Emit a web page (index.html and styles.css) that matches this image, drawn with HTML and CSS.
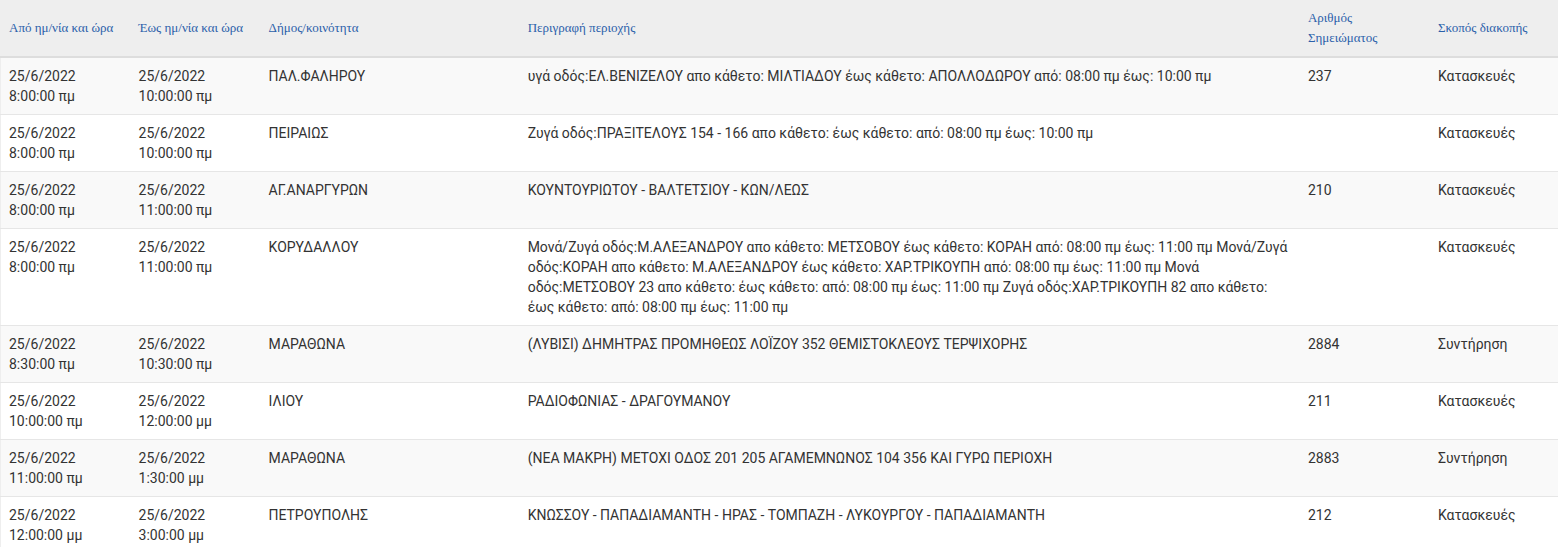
FILE: index.html
```html
<!DOCTYPE html>
<html lang="el">
<head>
<meta charset="utf-8">
<title>Διακοπές</title>
<link rel="stylesheet" href="styles.css">
</head>
<body>
<table class="grid">
  <colgroup>
    <col class="c-from"><col class="c-to"><col class="c-muni"><col class="c-desc"><col class="c-num"><col class="c-purpose">
  </colgroup>
  <thead>
    <tr>
      <th>Από ημ/νία και ώρα</th>
      <th>Έως ημ/νία και ώρα</th>
      <th>Δήμος/κοινότητα</th>
      <th>Περιγραφή περιοχής</th>
      <th>Αριθμός Σημειώματος</th>
      <th>Σκοπός διακοπής</th>
    </tr>
  </thead>
  <tbody>
    <tr>
      <td>25/6/2022<br>8:00:00 πμ</td>
      <td>25/6/2022<br>10:00:00 πμ</td>
      <td>ΠΑΛ.ΦΑΛΗΡΟΥ</td>
      <td>υγά οδός:ΕΛ.ΒΕΝΙΖΕΛΟΥ απο κάθετο: ΜΙΛΤΙΑΔΟΥ έως κάθετο: ΑΠΟΛΛΟΔΩΡΟΥ από: 08:00 πμ έως: 10:00 πμ</td>
      <td>237</td>
      <td>Κατασκευές</td>
    </tr>
    <tr>
      <td>25/6/2022<br>8:00:00 πμ</td>
      <td>25/6/2022<br>10:00:00 πμ</td>
      <td>ΠΕΙΡΑΙΩΣ</td>
      <td>Ζυγά οδός:ΠΡΑΞΙΤΕΛΟΥΣ 154 - 166 απο κάθετο: έως κάθετο: από: 08:00 πμ έως: 10:00 πμ</td>
      <td></td>
      <td>Κατασκευές</td>
    </tr>
    <tr>
      <td>25/6/2022<br>8:00:00 πμ</td>
      <td>25/6/2022<br>11:00:00 πμ</td>
      <td>ΑΓ.ΑΝΑΡΓΥΡΩΝ</td>
      <td>ΚΟΥΝΤΟΥΡΙΩΤΟΥ - ΒΑΛΤΕΤΣΙΟΥ - ΚΩΝ/ΛΕΩΣ</td>
      <td>210</td>
      <td>Κατασκευές</td>
    </tr>
    <tr>
      <td>25/6/2022<br>8:00:00 πμ</td>
      <td>25/6/2022<br>11:00:00 πμ</td>
      <td>ΚΟΡΥΔΑΛΛΟΥ</td>
      <td>Μονά/Ζυγά οδός:Μ.ΑΛΕΞΑΝΔΡΟΥ απο κάθετο: ΜΕΤΣΟΒΟΥ έως κάθετο: ΚΟΡΑΗ από: 08:00 πμ έως: 11:00 πμ Μονά/Ζυγά οδός:ΚΟΡΑΗ απο κάθετο: Μ.ΑΛΕΞΑΝΔΡΟΥ έως κάθετο: ΧΑΡ.ΤΡΙΚΟΥΠΗ από: 08:00 πμ έως: 11:00 πμ Μονά οδός:ΜΕΤΣΟΒΟΥ 23 απο κάθετο: έως κάθετο: από: 08:00 πμ έως: 11:00 πμ Ζυγά οδός:ΧΑΡ.ΤΡΙΚΟΥΠΗ 82 απο κάθετο: έως κάθετο: από: 08:00 πμ έως: 11:00 πμ</td>
      <td></td>
      <td>Κατασκευές</td>
    </tr>
    <tr>
      <td>25/6/2022<br>8:30:00 πμ</td>
      <td>25/6/2022<br>10:30:00 πμ</td>
      <td>ΜΑΡΑΘΩΝΑ</td>
      <td>(ΛΥΒΙΣΙ) ΔΗΜΗΤΡΑΣ ΠΡΟΜΗΘΕΩΣ ΛΟΪΖΟΥ 352 ΘΕΜΙΣΤΟΚΛΕΟΥΣ ΤΕΡΨΙΧΟΡΗΣ</td>
      <td>2884</td>
      <td>Συντήρηση</td>
    </tr>
    <tr>
      <td>25/6/2022<br>10:00:00 πμ</td>
      <td>25/6/2022<br>12:00:00 μμ</td>
      <td>ΙΛΙΟΥ</td>
      <td>ΡΑΔΙΟΦΩΝΙΑΣ - ΔΡΑΓΟΥΜΑΝΟΥ</td>
      <td>211</td>
      <td>Κατασκευές</td>
    </tr>
    <tr>
      <td>25/6/2022<br>11:00:00 πμ</td>
      <td>25/6/2022<br>1:30:00 μμ</td>
      <td>ΜΑΡΑΘΩΝΑ</td>
      <td>(ΝΕΑ ΜΑΚΡΗ) ΜΕΤΟΧΙ ΟΔΟΣ 201 205 ΑΓΑΜΕΜΝΩΝΟΣ 104 356 ΚΑΙ ΓΥΡΩ ΠΕΡΙΟΧΗ</td>
      <td>2883</td>
      <td>Συντήρηση</td>
    </tr>
    <tr>
      <td>25/6/2022<br>12:00:00 μμ</td>
      <td>25/6/2022<br>3:00:00 μμ</td>
      <td>ΠΕΤΡΟΥΠΟΛΗΣ</td>
      <td>ΚΝΩΣΣΟΥ - ΠΑΠΑΔΙΑΜΑΝΤΗ - ΗΡΑΣ - ΤΟΜΠΑΖΗ - ΛΥΚΟΥΡΓΟΥ - ΠΑΠΑΔΙΑΜΑΝΤΗ</td>
      <td>212</td>
      <td>Κατασκευές</td>
    </tr>
  </tbody>
</table>
</body>
</html>
```
FILE: styles.css
```css
html, body {
  margin: 0;
  padding: 0;
  background: #fff;
}
body {
  font-family: Roboto, "Liberation Sans", sans-serif;
  font-size: 14px;
  line-height: 20px;
  color: #333;
}
.grid {
  width: 1558px;
  border-collapse: collapse;
  border-spacing: 0;
  table-layout: fixed;
  border-left: 1px solid #eee;
}
.c-from { width: 130px; }
.c-to { width: 130px; }
.c-muni { width: 259px; }
.c-desc { width: 780px; }
.c-num { width: 130px; }
.c-purpose { width: 128px; }
.grid th {
  background: #eee;
  font-family: "Liberation Serif", serif;
  font-weight: normal;
  font-size: 13px;
  line-height: 20px;
  color: #2b60aa;
  text-align: left;
  vertical-align: middle;
  padding: 8px;
  border-bottom: 2px solid #ddd;
}
.grid td {
  padding: 8px;
  vertical-align: top;
  border-bottom: 1px solid #e6e6e6;
}
.grid tbody tr:nth-child(odd) {
  background: #f9f9f9;
}
```
